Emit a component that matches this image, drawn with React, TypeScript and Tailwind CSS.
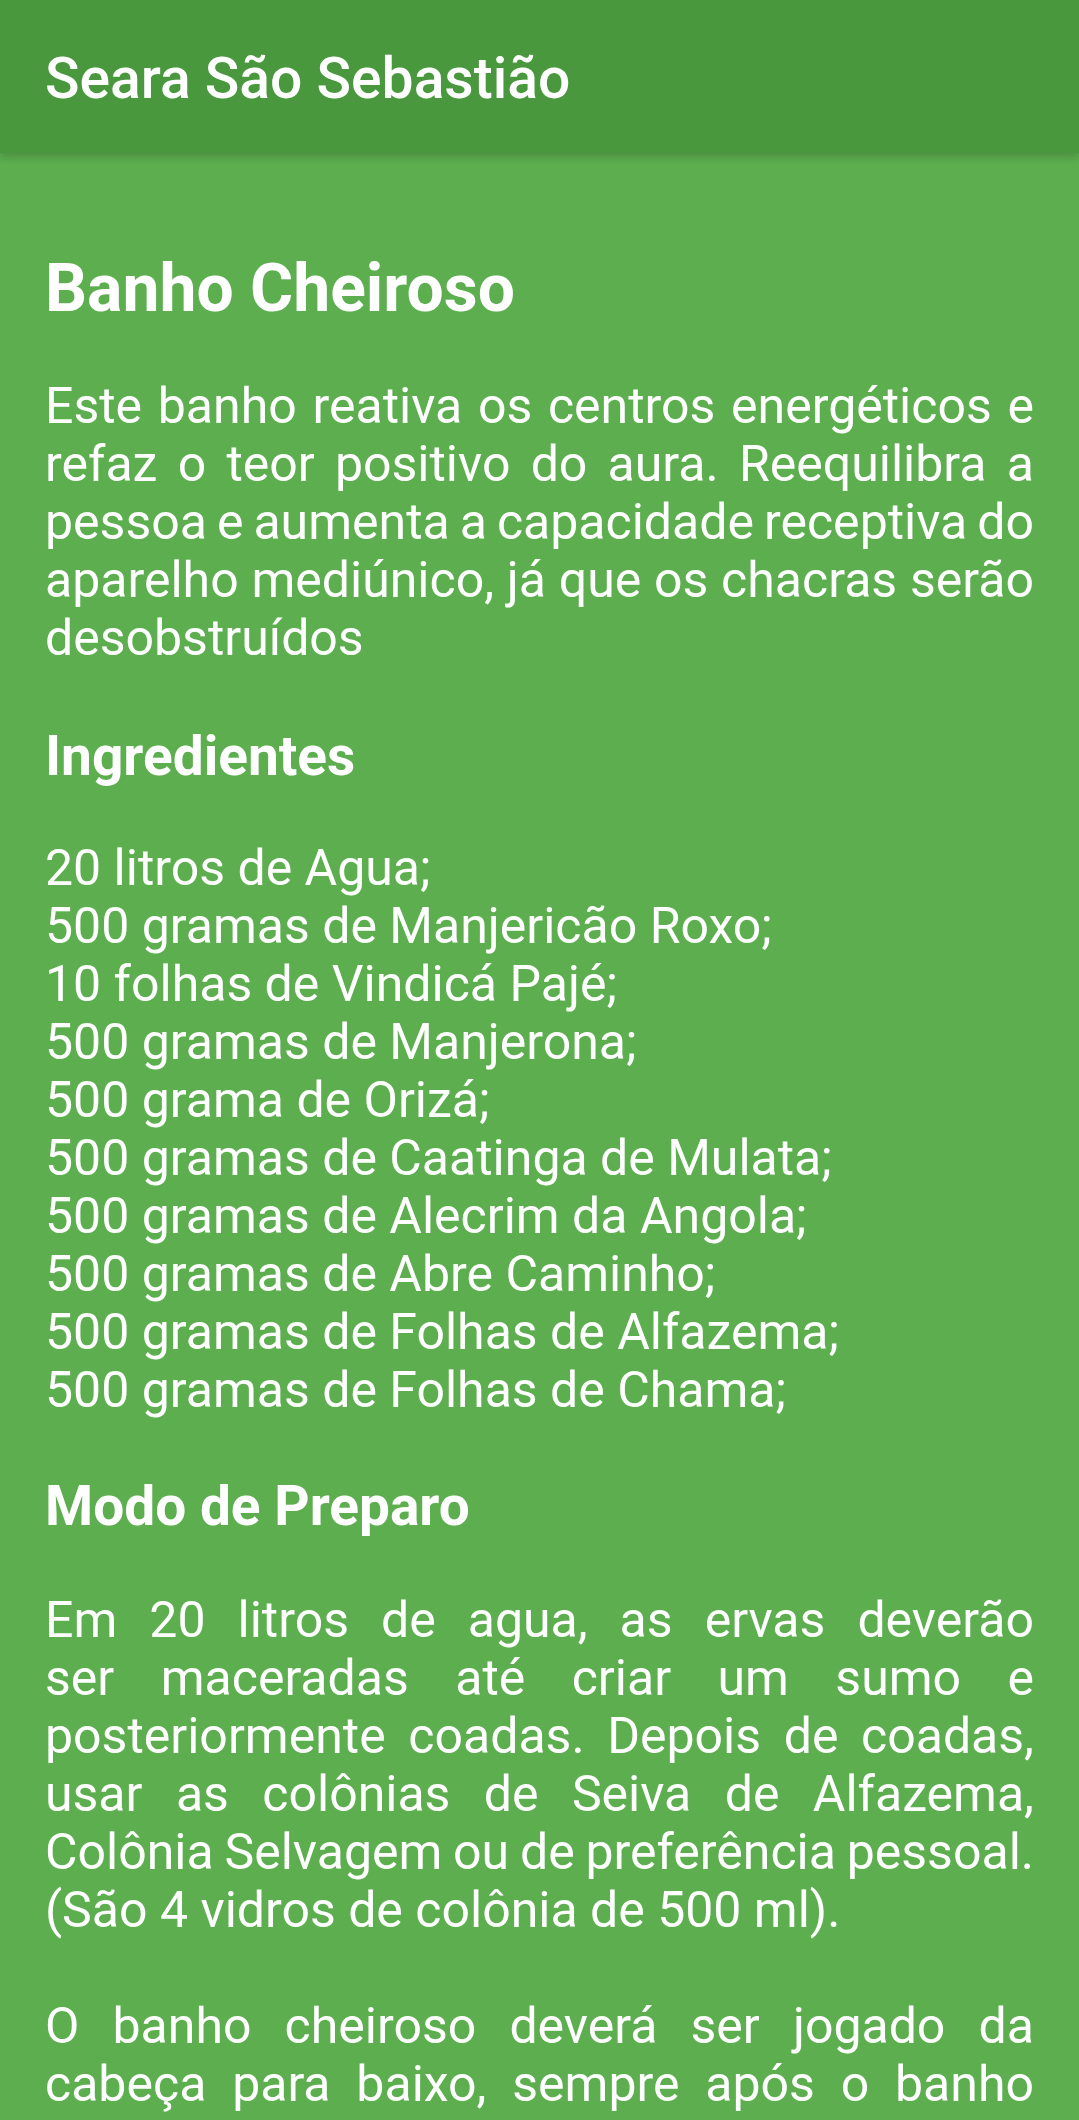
import React from "react";

const intro = [
  "Este banho reativa os centros energéticos e",
  "refaz o teor positivo do aura. Reequilibra a",
  "pessoa e aumenta a capacidade receptiva do",
  "aparelho mediúnico, já que os chacras serão",
  "desobstruídos",
];

const ingredients = [
  "20 litros de Agua;",
  "500 gramas de Manjericão Roxo;",
  "10 folhas de Vindicá Pajé;",
  "500 gramas de Manjerona;",
  "500 grama de Orizá;",
  "500 gramas de Caatinga de Mulata;",
  "500 gramas de Alecrim da Angola;",
  "500 gramas de Abre Caminho;",
  "500 gramas de Folhas de Alfazema;",
  "500 gramas de Folhas de Chama;",
];

const preparo = [
  "Em 20 litros de agua, as ervas deverão",
  "ser maceradas até criar um sumo e",
  "posteriormente coadas. Depois de coadas,",
  "usar as colônias de Seiva de Alfazema,",
  "Colônia Selvagem ou de preferência pessoal.",
  "(São 4 vidros de colônia de 500 ml).",
];

const uso = [
  "O banho cheiroso deverá ser jogado da",
  "cabeça para baixo, sempre após o banho",
];

// each line justified like the android TextView, last line left aligned
function Justified({
  lines,
  className = "",
  lastJustified = false,
}: {
  lines: string[];
  className?: string;
  lastJustified?: boolean;
}) {
  return (
    <div className={className}>
      {lines.map((line, i) =>
        i === lines.length - 1 && !lastJustified ? (
          <p key={i} className="whitespace-nowrap">
            {line}
          </p>
        ) : (
          <p key={i} className="flex justify-between whitespace-nowrap">
            {line.split(" ").map((word, j) => (
              <span key={j}>{word}</span>
            ))}
          </p>
        )
      )}
    </div>
  );
}

export default function App() {
  return (
    <div className="relative min-h-[2120px] w-full overflow-hidden bg-[#5cae4f] font-['Roboto','Liberation_Sans',sans-serif] text-white">
      <header className="relative z-10 flex h-[153px] items-center bg-[#4a983e] px-[45px] pt-[3px] shadow-[0_4px_8px_rgba(0,0,0,0.18)]">
        <h1 className="text-[57px] font-medium leading-none">Seara São Sebastião</h1>
      </header>

      <main className="px-[45px] pt-[97px] text-[50px] leading-[58px]">
        <h2 className="text-[66px] font-bold leading-[77px]">Banho Cheiroso</h2>

        <Justified lines={intro} className="mt-[50px]" />

        <h3 className="mt-[57px] text-[55px] font-bold leading-[64px]">Ingredientes</h3>

        <ul className="mt-[51px]">
          {ingredients.map((item) => (
            <li key={item}>{item}</li>
          ))}
        </ul>

        <h3 className="mt-[55px] text-[55px] font-bold leading-[64px]">Modo de Preparo</h3>

        <Justified lines={preparo} className="mt-[53px]" />

        <Justified lines={uso} lastJustified className="mt-[58px]" />
      </main>
    </div>
  );
}
